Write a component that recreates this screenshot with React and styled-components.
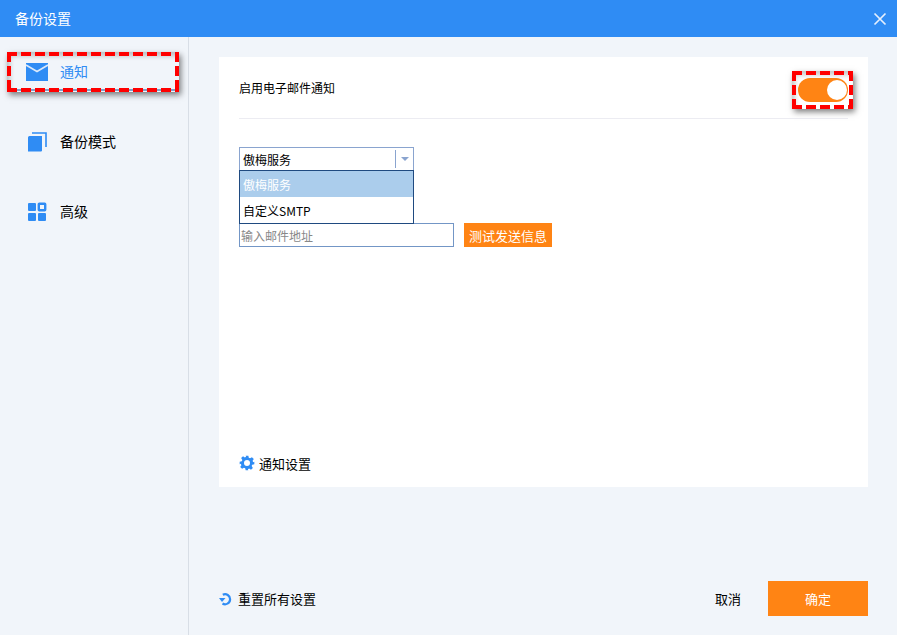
import React from 'react';
import styled, { createGlobalStyle } from 'styled-components';

const GlobalStyle = createGlobalStyle`
  html, body { margin: 0; padding: 0; background: #f1f5fa; }
  body { font-family: "Noto Sans CJK SC", "Liberation Sans", sans-serif; color: #000; }
`;

const Win = styled.div`
  width: 897px;
  height: 635px;
  display: flex;
  flex-direction: column;
  overflow: hidden;
  background: #f1f5fa;
`;

const TitleBar = styled.div`
  height: 37px;
  flex: none;
  background: #2f8cf4;
  color: #fff;
  display: flex;
  align-items: center;
  justify-content: space-between;
  padding: 0 10px 2px 15px;
  box-sizing: border-box;
  font-size: 14px;
`;

const CloseBtn = styled.button`
  width: 14px;
  height: 14px;
  padding: 0;
  margin-top: 2px;
  border: 0;
  background: none;
  display: flex;
`;

const Body = styled.div`
  flex: 1;
  display: flex;
`;

const Side = styled.div`
  width: 188px;
  flex: none;
  border-right: 1px solid #d8dee6;
  padding-top: 16px;
  display: flex;
  flex-direction: column;
`;

const NavItem = styled.div`
  height: 38px;
  box-sizing: border-box;
  margin: 0 10px 32px 8px;
  padding-left: 18px;
  display: flex;
  align-items: center;
  gap: 12px;
  font-size: 14px;
  color: ${p => (p.$active ? '#2f8cf4' : '#000')};
  border-bottom: 2px solid ${p => (p.$active ? '#7f9fc8' : 'transparent')};
  position: relative;
`;

const NavIcon = styled.span`
  width: 22px;
  height: 22px;
  margin-top: 2px;
  display: flex;
  align-items: center;
  justify-content: center;
`;

const NavLabel = styled.span`
  padding-bottom: 1px;
`;

const Mark = styled.span`
  position: absolute;
  pointer-events: none;
  &::before, &::after {
    content: '';
    position: absolute;
    inset: 0;
  }
  &::before {
    box-shadow: 2px 3px 6px rgba(0, 0, 0, 0.5), inset 3px 4px 5px rgba(0, 0, 0, 0.22);
  }
  &::after {
    background:
      repeating-linear-gradient(90deg, #f00 0 10px, transparent 10px 14px) top / 100% 4px no-repeat,
      repeating-linear-gradient(90deg, #f00 0 10px, transparent 10px 14px) bottom / 100% 4px no-repeat,
      repeating-linear-gradient(180deg, #f00 0 10px, transparent 10px 14px) left / 4px 100% no-repeat,
      repeating-linear-gradient(180deg, #f00 0 10px, transparent 10px 14px) right / 4px 100% no-repeat;
  }
`;

const NavMark = styled(Mark)`
  left: -1px;
  top: -1px;
  right: -1px;
  bottom: -3px;
`;

const ToggleMark = styled(Mark)`
  left: -6px;
  top: -7px;
  right: -5px;
  bottom: -7px;
`;

const Main = styled.div`
  flex: 1;
  padding: 20px 29px 19px 30px;
  display: flex;
  flex-direction: column;
`;

const Card = styled.div`
  height: 430px;
  background: #fff;
  padding: 0 20px;
  display: flex;
  flex-direction: column;
`;

const CardHead = styled.div`
  height: 61px;
  flex: none;
  border-bottom: 1px solid #ececf2;
  display: flex;
  align-items: center;
  justify-content: space-between;
  font-size: 12px;
`;

const Toggle = styled.div`
  width: 50px;
  height: 24px;
  margin-top: 4px;
  border-radius: 12px;
  background: #ff8414;
  position: relative;
`;

const Knob = styled.span`
  position: absolute;
  right: 1px;
  top: 2px;
  width: 20px;
  height: 20px;
  border-radius: 50%;
  background: #fff;
`;

const Form = styled.div`
  margin-top: 28px;
  display: flex;
  flex-direction: column;
  gap: 52px;
  font-size: 12px;
`;

const SelectWrap = styled.div`
  width: 175px;
  position: relative;
`;

const SelectBox = styled.div`
  height: 24px;
  box-sizing: border-box;
  border: 1px solid #8aa4cf;
  display: flex;
  align-items: center;
  padding-left: 3px;
`;

const SelectValue = styled.span`
  flex: 1;
`;

const Arrow = styled.span`
  width: 17px;
  height: 18px;
  border-left: 1px solid #8aa4cf;
  display: flex;
  align-items: center;
  justify-content: center;
  &::after {
    content: '';
    border-left: 4px solid transparent;
    border-right: 4px solid transparent;
    border-top: 4px solid #8aa4cf;
  }
`;

const Menu = styled.div`
  position: absolute;
  left: 0;
  top: 23px;
  width: 175px;
  box-sizing: border-box;
  border: 1px solid #1f4a80;
  background: #fff;
  z-index: 2;
`;

const MenuItem = styled.div`
  height: 26px;
  display: flex;
  align-items: center;
  padding-left: 3px;
  background: ${p => (p.$on ? '#abcdec' : '#fff')};
  color: ${p => (p.$on ? '#fff' : '#000')};
`;

const EmailRow = styled.div`
  display: flex;
  gap: 10px;
`;

const EmailInput = styled.div`
  width: 215px;
  height: 24px;
  box-sizing: border-box;
  border: 1px solid #7396c6;
  padding-left: 1px;
  display: flex;
  align-items: center;
  color: #888;
`;

const TestBtn = styled.div`
  width: 88px;
  height: 24px;
  background: #ff8414;
  color: #fff;
  font-size: 13px;
  display: flex;
  align-items: center;
  justify-content: center;
`;

const CardFoot = styled.div`
  margin-top: auto;
  height: 46px;
  padding-bottom: 2px;
  box-sizing: border-box;
  display: flex;
  align-items: center;
  gap: 4px;
  font-size: 13px;
`;

const Bottom = styled.div`
  margin-top: auto;
  display: flex;
  align-items: center;
  height: 35px;
  font-size: 13px;
`;

const Reset = styled.div`
  display: flex;
  align-items: center;
  gap: 5px;
  flex: 1;
`;

const Cancel = styled.div`
  margin-right: 27px;
`;

const OkBtn = styled.div`
  width: 100px;
  height: 35px;
  background: #ff8414;
  color: #fff;
  display: flex;
  align-items: center;
  justify-content: center;
`;

const MailIcon = () => (
  <svg width="22" height="18" viewBox="0 0 22 18">
    <path d="M0 0h22v18H0z" fill="#2f8cf4" />
    <path d="M0 2l11 6.5L22 2" fill="none" stroke="#dbe9fb" strokeWidth="1.6" />
  </svg>
);

const CopyIcon = () => (
  <svg width="20" height="20" viewBox="0 0 20 20">
    <path d="M1 5.5A1.5 1.5 0 0 1 2.500 4H15v14.500a1 1 0 0 1-1 1H1z" fill="#2f8cf4" />
    <path d="M5 1h14v14" fill="none" stroke="#2f8cf4" strokeWidth="1.6" />
  </svg>
);

const GridIcon = () => (
  <svg width="20" height="20" viewBox="0 0 20 20">
    <rect x="1" y="1" width="8" height="8" rx="1" fill="#2f8cf4" />
    <rect x="11.800" y="1.800" width="6.400" height="6.400" rx="0.5" fill="none" stroke="#2f8cf4" strokeWidth="2.400" />
    <rect x="1" y="11" width="8" height="8" rx="1" fill="#2f8cf4" />
    <rect x="11" y="11" width="8" height="8" rx="1" fill="#2f8cf4" />
  </svg>
);

const GearIcon = () => (
  <svg width="16" height="16" viewBox="0 0 24 24">
    <path
      fill="#2f8cf4"
      fillRule="evenodd"
      d="M10 1h4l.7 3.200 1.900.8 2.800-1.800 2.800 2.800-1.800 2.800.8 1.900L23 10v4l-3.200.7-.8 1.900 1.800 2.800-2.800 2.800-2.800-1.800-1.900.8L14 23h-4l-.7-3.200-1.900-.8-2.800 1.800-2.800-2.800 1.800-2.800-.8-1.900L1 14v-4l3.200-.7.8-1.900-1.800-2.800 2.800-2.800 2.800 1.800 1.900-.8zM12 7.500a4.500 4.500 0 1 0 0 9 4.500 4.500 0 0 0 0-9z"
    />
  </svg>
);

const ResetIcon = () => (
  <svg width="14" height="14" viewBox="0 0 14 14">
    <path d="M3.800 2.800A5 5 0 1 1 3.500 11.500" fill="none" stroke="#2f8cf4" strokeWidth="2.200" />
    <path d="M0 6h6.500L3 10z" fill="#2f8cf4" />
  </svg>
);

const CloseIcon = () => (
  <svg width="14" height="14" viewBox="0 0 14 14">
    <path d="M1.500 1.500l11 11M12.500 1.500l-11 11" stroke="#e4effd" strokeWidth="1.700" fill="none" />
  </svg>
);

export default function App() {
  return (
    <Win>
      <GlobalStyle />
      <TitleBar>
        <span>备份设置</span>
        <CloseBtn><CloseIcon /></CloseBtn>
      </TitleBar>
      <Body>
        <Side>
          <NavItem $active>
            <NavIcon><MailIcon /></NavIcon>
            <NavLabel>通知</NavLabel>
            <NavMark />
          </NavItem>
          <NavItem>
            <NavIcon><CopyIcon /></NavIcon>
            <NavLabel>备份模式</NavLabel>
          </NavItem>
          <NavItem>
            <NavIcon><GridIcon /></NavIcon>
            <NavLabel>高级</NavLabel>
          </NavItem>
        </Side>
        <Main>
          <Card>
            <CardHead>
              启用电子邮件通知
              <Toggle>
                <Knob />
                <ToggleMark />
              </Toggle>
            </CardHead>
            <Form>
              <SelectWrap>
                <SelectBox>
                  <SelectValue>傲梅服务</SelectValue>
                  <Arrow />
                </SelectBox>
                <Menu>
                  <MenuItem $on>傲梅服务</MenuItem>
                  <MenuItem>自定义SMTP</MenuItem>
                </Menu>
              </SelectWrap>
              <EmailRow>
                <EmailInput>输入邮件地址</EmailInput>
                <TestBtn>测试发送信息</TestBtn>
              </EmailRow>
            </Form>
            <CardFoot>
              <GearIcon />
              通知设置
            </CardFoot>
          </Card>
          <Bottom>
            <Reset>
              <ResetIcon />
              重置所有设置
            </Reset>
            <Cancel>取消</Cancel>
            <OkBtn>确定</OkBtn>
          </Bottom>
        </Main>
      </Body>
    </Win>
  );
}
